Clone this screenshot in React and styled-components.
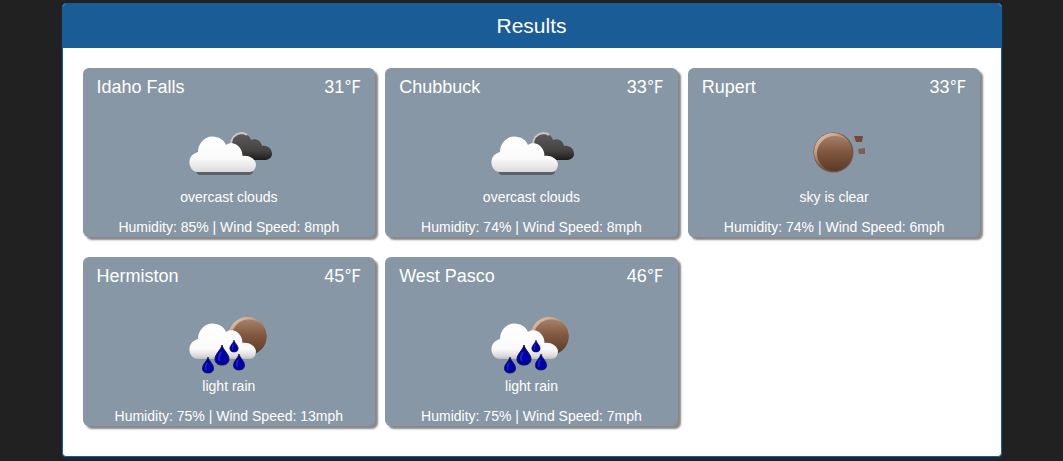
import React from 'react';
import styled, { createGlobalStyle } from 'styled-components';

const GlobalStyle = createGlobalStyle`
  *, *::before, *::after { box-sizing: border-box; }
  body {
    margin: 0;
    background: #212121;
    color: #fff;
    font-family: "Liberation Sans", Arial, sans-serif;
    font-size: 14px;
    line-height: 20px;
  }
`;

const Page = styled.main`
  max-width: 970px;
  margin: 0 auto;
  padding: 3px 15px 4px;
`;

const Panel = styled.section`
  background: #fff;
  border: 1px solid #1a5c96;
  border-radius: 4px;
  overflow: hidden;
  box-shadow: 0 1px 3px #0f3450;
`;

const PanelHeader = styled.header`
  padding: 10px 20px;
  background: #1a5c96;
  text-align: center;
`;

const PanelTitle = styled.h1`
  margin: 0;
  font-size: 21px;
  font-weight: 400;
  line-height: 24px;
`;

const CardGrid = styled.div`
  display: grid;
  grid-template-columns: repeat(3, 1fr);
  gap: 20px 10px;
  padding: 20px 20px 30px;
`;

const Card = styled.article`
  display: flex;
  flex-direction: column;
  align-items: center;
  padding-top: 7px;
  background: #8797a6;
  border-radius: 6px;
  box-shadow: 3px 3px 2px #888;
`;

const CardTop = styled.div`
  display: flex;
  justify-content: space-between;
  align-self: stretch;
  padding: 0 14px;
  font-size: 18px;
  line-height: 24px;
`;

const City = styled.h2`
  margin: 0;
  font-size: inherit;
  font-weight: 400;
`;

const Temperature = styled.div`
  height: 24px;
`;

const Unit = styled.span`
  font-family: "Noto Sans CJK SC", sans-serif;
  font-size: 17px;
  line-height: 1;
`;

const Picture = styled.svg`
  display: block;
  width: 100px;
  height: 80px;
  margin-top: 8px;
  filter: blur(0.7px);
`;

const Line = styled.p`
  margin: 0 0 ${(p) => (p.$spaced ? '10px' : '0')};
  text-align: center;
`;

const FRONT =
  'M17 65C11 64 9 58 9.5 54C10 49 14 46 18 45C18 36 25 29.5 32 29.5C39 29.5 44 33 46 38C49 35.5 54 36 57 38C61 41 62.5 45 62.5 49C68 48 75 51 76 57C76 62 73 65 70 65Z';

function Cloud({ fill = 'url(#cloudWhite)' }) {
  return <path d={FRONT} fill={fill} />;
}

function Drop({ x, y, s }) {
  return (
    <g transform={`translate(${x} ${y}) scale(${s})`}>
      <path
        d="M0-10C1-5 7-1 7 4C7 8 4 10 0 10C-4 10-7 8-7 4C-7-1-1-5 0-10Z"
        fill="#0000a8"
        stroke="#15154d"
        strokeWidth="1"
      />
      <path d="M-1-3C-3 1-4 3-2 6" fill="none" stroke="#2020c8" strokeWidth="2" />
    </g>
  );
}

const drawings = {
  clouds: (
    <>
      <path
        d="M51 38C50 31 54 26 60 26C66 26 70 29 71 33C76 31 81 34 82 39C88 38 92 42 92 47C92 51 88 53 84 53H62Z"
        fill="url(#cloudDark)"
      />
      <path d="M51 38C51 31 55 27 61 26Q65 26 67 28" fill="none" stroke="#c9c8c6" strokeWidth="2" />
      <path d="M16 62H73V65Q72 68 69 68H20Q17 68 16 64Z" fill="#5c6065" />
      <Cloud />
    </>
  ),
  clear: (
    <g transform="translate(-1 0)">
      <circle cx="49.5" cy="45.5" r="20" fill="#765544" />
      <circle cx="49" cy="45" r="19" fill="url(#sunRim)" />
      <circle cx="50.5" cy="46.5" r="17.5" fill="url(#sunBrown)" />
      <path d="M70 29H79L78 35H72Z" fill="#754838" />
      <path d="M74 42L81 41V47H75Z" fill="#805f52" />
    </g>
  ),
  rain: (
    <>
      <circle cx="67.5" cy="40" r="19" fill="url(#sunRim)" />
      <circle cx="69" cy="41" r="17.5" fill="url(#sunBrown)" />
      <g transform="translate(0 -2)">
        <Cloud fill="url(#cloudRain)" />
      </g>
      <Drop x={28} y={69} s={0.8} />
      <Drop x={42} y={59} s={1} />
      <Drop x={54} y={50} s={0.6} />
      <Drop x={59} y={66} s={0.8} />
    </>
  ),
};

const GradientStore = styled.svg`
  position: absolute;
`;

function Gradients() {
  return (
    <GradientStore width="0" height="0" aria-hidden="true">
      <defs>
        <linearGradient id="cloudWhite" gradientUnits="userSpaceOnUse" x1="0" y1="30" x2="0" y2="66">
          <stop offset="0" stopColor="#fff" />
          <stop offset="0.6" stopColor="#fafafa" />
          <stop offset="1" stopColor="#d8d8da" />
        </linearGradient>
        <linearGradient id="cloudRain" gradientUnits="userSpaceOnUse" x1="0" y1="30" x2="0" y2="66">
          <stop offset="0" stopColor="#fff" />
          <stop offset="0.7" stopColor="#fafafa" />
          <stop offset="0.9" stopColor="#d8d8da" />
          <stop offset="1" stopColor="#aeb2b8" />
        </linearGradient>
        <linearGradient id="cloudDark" x1="0" y1="0" x2="0" y2="1">
          <stop offset="0" stopColor="#5c5b59" />
          <stop offset="0.65" stopColor="#444341" />
          <stop offset="1" stopColor="#1c1c1c" />
        </linearGradient>
        <linearGradient id="sunRim" x1="0" y1="0" x2="0.6" y2="0.9">
          <stop offset="0" stopColor="#f0d5c0" />
          <stop offset="0.4" stopColor="#c29a80" />
          <stop offset="1" stopColor="#5c3c2b" />
        </linearGradient>
        <linearGradient id="sunBrown" x1="0" y1="0" x2="0" y2="1">
          <stop offset="0" stopColor="#a5806a" />
          <stop offset="0.45" stopColor="#81583f" />
          <stop offset="1" stopColor="#593a28" />
        </linearGradient>
      </defs>
    </GradientStore>
  );
}

const results = [
  { city: 'Idaho Falls', temp: 31, icon: 'clouds', text: 'overcast clouds', humidity: 85, wind: 8 },
  { city: 'Chubbuck', temp: 33, icon: 'clouds', text: 'overcast clouds', humidity: 74, wind: 8 },
  { city: 'Rupert', temp: 33, icon: 'clear', text: 'sky is clear', humidity: 74, wind: 6 },
  { city: 'Hermiston', temp: 45, icon: 'rain', text: 'light rain', humidity: 75, wind: 13 },
  { city: 'West Pasco', temp: 46, icon: 'rain', text: 'light rain', humidity: 75, wind: 7 },
];

function WeatherCard({ city, temp, icon, text, humidity, wind }) {
  return (
    <Card>
      <CardTop>
        <City>{city}</City>
        <Temperature>
          {temp}
          <Unit>℉</Unit>
        </Temperature>
      </CardTop>
      <Picture viewBox="-1 0 100 80" aria-hidden="true">
        {drawings[icon]}
      </Picture>
      <Line $spaced>{text}</Line>
      <Line>{`Humidity: ${humidity}% | Wind Speed: ${wind}mph`}</Line>
    </Card>
  );
}

export default function App() {
  return (
    <>
      <GlobalStyle />
      <Gradients />
      <Page>
        <Panel>
          <PanelHeader>
            <PanelTitle>Results</PanelTitle>
          </PanelHeader>
          <CardGrid>
            {results.map((r) => (
              <WeatherCard key={r.city} {...r} />
            ))}
          </CardGrid>
        </Panel>
      </Page>
    </>
  );
}
